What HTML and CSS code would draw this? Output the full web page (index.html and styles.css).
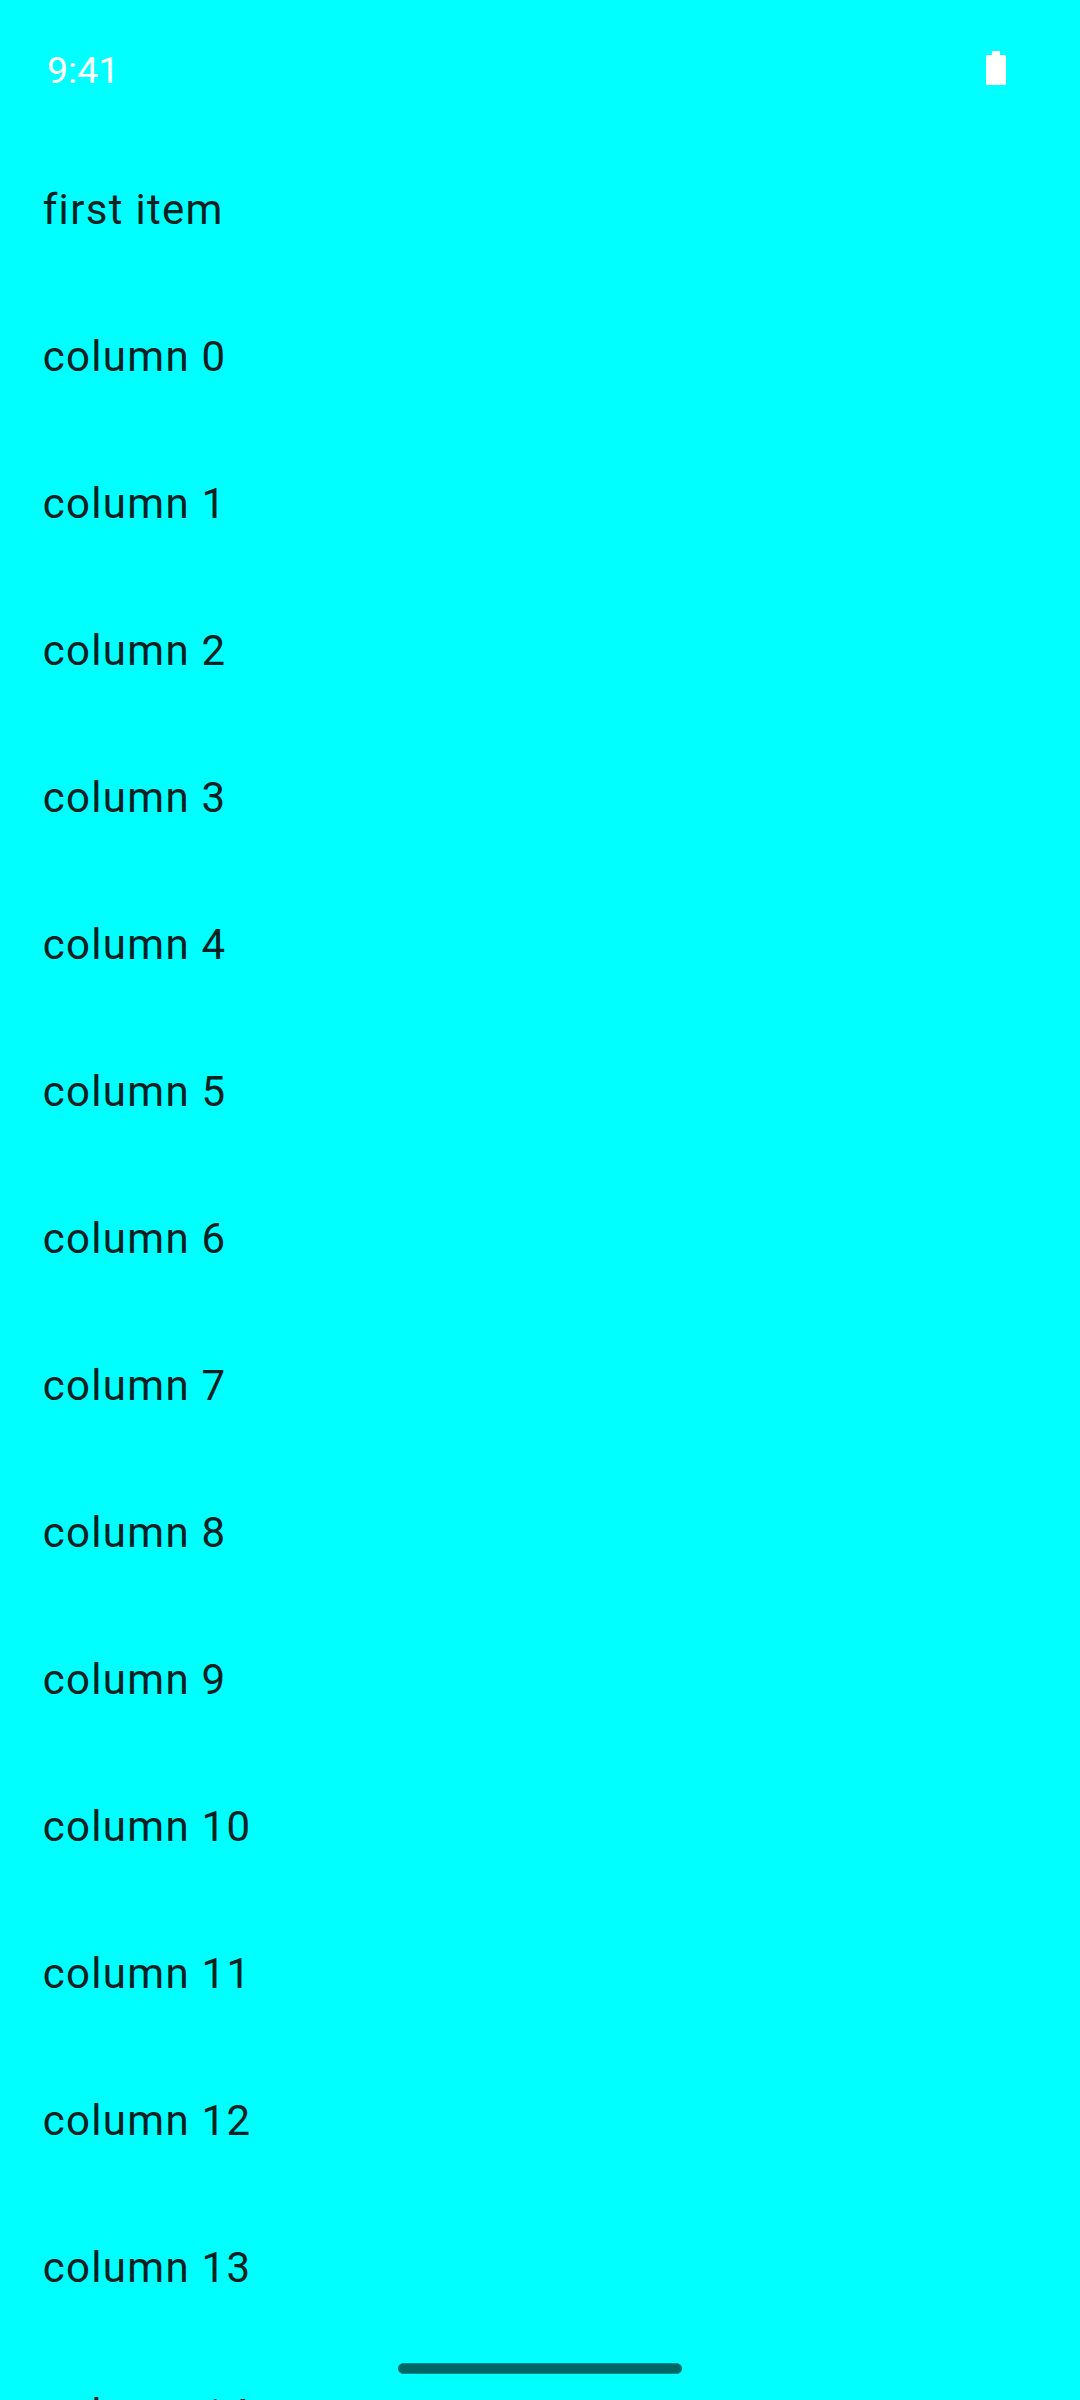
FILE: index.html
```html
<!DOCTYPE html>
<html lang="en">
<head>
<meta charset="utf-8">
<title>Columns</title>
<link rel="stylesheet" href="styles.css">
</head>
<body>
<main class="screen">
<header class="status"><span class="clock">9:41</span><svg class="battery" width="20" height="34" viewBox="0 0 20 34"><path fill="#fff" d="M6 0h8v4h5l1 1v28l-1 1H1l-1-1V5l1-1h5z"/></svg></header>
<ul class="list">
<li>first item</li>
<li>column 0</li>
<li>column 1</li>
<li>column 2</li>
<li>column 3</li>
<li>column 4</li>
<li>column 5</li>
<li>column 6</li>
<li>column 7</li>
<li>column 8</li>
<li>column 9</li>
<li>column 10</li>
<li>column 11</li>
<li>column 12</li>
<li>column 13</li>
<li>column 14</li>
</ul>
<div class="handle"></div>
</main>
</body>
</html>
```
FILE: styles.css
```css
body { margin: 0; }
.screen {
  position: relative;
  width: 1080px;
  height: 2400px;
  overflow: hidden;
  background: #00ffff;
  font-family: Roboto, sans-serif;
}
.status {
  display: flex;
  align-items: center;
  justify-content: space-between;
  box-sizing: border-box;
  height: 136px;
  padding: 0 74px 0 47px;
  color: #fff;
}
.clock {
  padding-top: 4px;
  font-size: 37.5px;
}
.list {
  margin: 0;
  padding: 0;
  list-style: none;
}
.list li {
  box-sizing: border-box;
  height: 147px;
  padding: 42px 42px 0 42.7px;
  font-size: 42px;
  line-height: 63px;
  letter-spacing: 1.3125px;
  color: #002121;
}
.handle {
  position: absolute;
  left: 398px;
  top: 2363px;
  width: 284px;
  height: 11px;
  box-sizing: border-box;
  border: solid #008a8a;
  border-width: 1px 0;
  border-radius: 5.5px;
  background: #006666;
}
```
